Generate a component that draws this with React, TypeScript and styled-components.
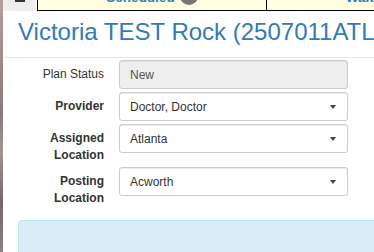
import React from "react";
import styled, { createGlobalStyle } from "styled-components";

const GlobalStyle = createGlobalStyle`
  html, body {
    margin: 0;
    padding: 0;
    background: #fff;
    overflow: hidden;
  }
  body {
    font-family: "Liberation Sans", Arial, sans-serif;
    color: #333;
  }
`;

const Page = styled.div`
  display: flex;
  height: 100vh;
`;

const Edge = styled.div`
  width: 3px;
  flex-shrink: 0;
  background: linear-gradient(
    180deg,
    #b39f9b 0%,
    #9d8986 25%,
    #8a7a7c 45%,
    #a39390 60%,
    #75676b 80%,
    #8d7f80 100%
  );
`;

const Main = styled.div`
  flex: 1;
  min-width: 0;
  overflow: hidden;
`;

const TabBar = styled.div`
  display: flex;
  height: 11px;
  overflow: hidden;
`;

const MenuButton = styled.div`
  width: 33px;
  height: 11px;
  flex-shrink: 0;
  margin-right: 1px;
  background: #eee;
  border-radius: 0 0 3px 3px;
  display: flex;
  flex-direction: column;
  justify-content: flex-end;
  align-items: center;
  gap: 3px;
  padding-bottom: 9px;
  box-sizing: border-box;
  overflow: hidden;
`;

const MenuBar = styled.span`
  display: block;
  width: 10px;
  height: 2px;
  flex-shrink: 0;
  background: #333;
`;

const Tab = styled.div`
  width: 229px;
  height: 11px;
  flex-shrink: 0;
  box-sizing: border-box;
  background: #ffffe0;
  border-left: 1px solid #000;
  border-bottom: 1px solid #000;
  display: flex;
  justify-content: center;
  align-items: flex-end;
  padding-bottom: 5px;
`;

const TabInner = styled.div`
  display: flex;
  align-items: flex-end;
  gap: 5px;
`;

const TabLabel = styled.span`
  font-weight: bold;
  font-size: 13.5px;
  line-height: 18px;
  margin-bottom: -2px;
  color: #337ab7;
  white-space: nowrap;
`;

const Badge = styled.span`
  width: 18px;
  height: 18px;
  border-radius: 50%;
  background: #777;
  color: #fff;
  font-size: 10px;
  font-weight: bold;
  line-height: 18px;
  text-align: center;
`;

const Header = styled.div`
  padding: 7px 15px 12px;
  border-bottom: 1px solid #e8e8e8;
`;

const Title = styled.h1`
  margin: 0;
  font-size: 24px;
  line-height: 27px;
  font-weight: normal;
  color: #337ab7;
  white-space: nowrap;
`;

const Form = styled.div`
  display: flex;
  flex-direction: column;
  gap: 3px;
  padding-top: 2px;
`;

const Row = styled.div`
  display: grid;
  grid-template-columns: 101px 229px;
  column-gap: 15px;
  align-items: start;
`;

const Label = styled.label<{ $bold?: boolean }>`
  padding: 6px 0 0 13px;
  font-size: 12px;
  line-height: 17px;
  font-weight: ${(p) => (p.$bold ? "bold" : "normal")};
  color: #333;
  text-align: right;
`;

const Control = styled.div<{ $readonly?: boolean }>`
  height: 29px;
  box-sizing: border-box;
  display: flex;
  align-items: center;
  justify-content: space-between;
  padding: 0 11px 0 10px;
  border: 1px solid #ccc;
  border-radius: 3px;
  background: ${(p) => (p.$readonly ? "#eee" : "#fff")};
  color: ${(p) => (p.$readonly ? "#555" : "#333")};
  box-shadow: inset 0 1px 1px rgba(0, 0, 0, 0.075);
  font-size: 12px;
`;

const Caret = styled.span`
  width: 0;
  height: 0;
  border-left: 3.5px solid transparent;
  border-right: 3.5px solid transparent;
  border-top: 4px solid #444;
`;

const Alert = styled.div`
  margin: 13px -20px 0 15px;
  height: 60px;
  background: #d9edf7;
  border: 1px solid #bce8f1;
  border-radius: 4px;
`;

const fields = [
  { label: "Plan Status", value: "New", readonly: true },
  { label: "Provider", value: "Doctor, Doctor" },
  { label: "Assigned Location", value: "Atlanta" },
  { label: "Posting Location", value: "Acworth" },
];

export default function App() {
  return (
    <>
      <GlobalStyle />
      <Page>
        <Edge />
        <Main>
          <TabBar>
            <MenuButton>
              <MenuBar />
              <MenuBar />
              <MenuBar />
            </MenuButton>
            <Tab>
              <TabInner>
                <TabLabel>Scheduled</TabLabel>
                <Badge>3</Badge>
              </TabInner>
            </Tab>
            <Tab>
              <TabInner>
                <TabLabel>Waitlist</TabLabel>
                <Badge>0</Badge>
              </TabInner>
            </Tab>
          </TabBar>
          <Header>
            <Title>Victoria TEST Rock (2507011ATL)</Title>
          </Header>
          <Form>
            {fields.map((f) => (
              <Row key={f.label}>
                <Label $bold={!f.readonly}>{f.label}</Label>
                <Control $readonly={f.readonly}>
                  <span>{f.value}</span>
                  {!f.readonly && <Caret />}
                </Control>
              </Row>
            ))}
          </Form>
          <Alert />
        </Main>
      </Page>
    </>
  );
}
